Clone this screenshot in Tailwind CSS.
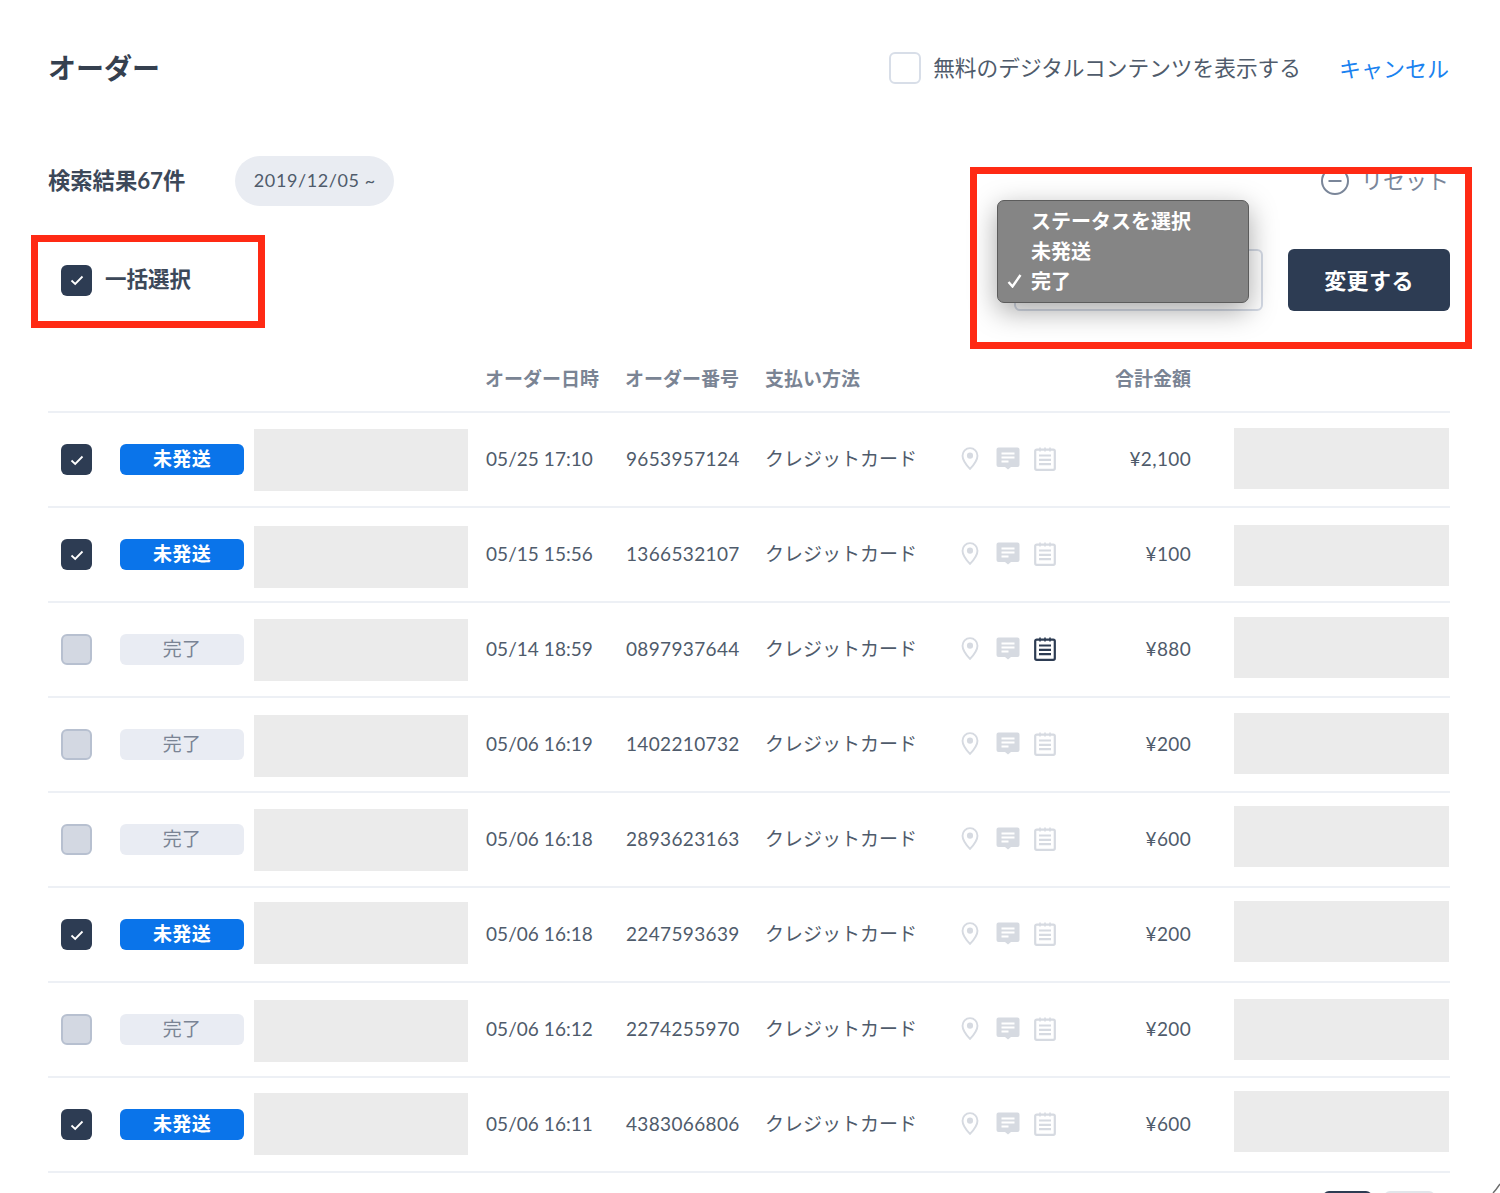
<!DOCTYPE html>
<html lang="ja">
<head>
  <meta charset="UTF-8">
  <meta name="viewport" content="width=device-width, initial-scale=1.0">
  <title>オーダー</title>
  <script src="https://cdn.jsdelivr.net/npm/@tailwindcss/browser@4"></script>
</head>
<body class="bg-white h-[1193px] overflow-hidden relative font-['Lato','Noto_Sans_CJK_JP',sans-serif] text-[#2d3c53]">
  <div class="pl-12 pr-[50px]">
    <!-- header -->
    <div class="flex items-center h-[136px]">
      <h1 class="text-[28px] font-bold text-[#35404f] flex-1">オーダー</h1>
      <span class="w-[32px] h-[32px] rounded-md border-2 border-[#d8dee8] mr-[12px]"></span>
      <span class="text-[21.7px] text-[#4f5b6b]">無料のデジタルコンテンツを表示する</span>
      <a class="text-[22px] text-[#1a82f0] ml-[38px] mr-[1px]">キャンセル</a>
    </div>

    <!-- search summary -->
    <div class="flex items-center h-[50px] mt-[20px]">
      <span class="text-[22.3px] font-bold text-[#3c4859] mr-[50px]">検索結果67件</span>
      <span class="h-[50px] w-[159px] rounded-full bg-[#e9ecf2] text-[18px] tracking-[0.6px] text-[#4f5b6b] flex items-center justify-center pb-[2px]">2019/12/05 ~</span>
    </div>

    <!-- bulk actions -->
    <div class="flex items-center h-[62px] mt-[43px]">
      <span class="ml-[13px] w-[31px] h-[31px] rounded-md bg-[#2d3c53] flex items-center justify-center">
        <svg width="14" height="12" viewBox="0 0 14 12" fill="none" stroke="white" stroke-width="1.8"><path d="M1.5 6.5 5.2 10 12.5 2.5"/></svg>
      </span>
      <span class="text-[21.5px] font-bold text-[#3c4859] ml-[13px] mb-[2px]">一括選択</span>
      <div class="flex-1"></div>
      <div class="w-[249px] h-[62px] rounded-md border-2 border-[#d5dbe6] mr-[25px]"></div>
      <button class="w-[162px] h-[62px] rounded-md bg-[#2d3c53] text-white text-[22px] font-semibold tracking-[0.4px]">変更する</button>
    </div>

    <!-- table head -->
    <div class="flex items-center h-[68px] mt-[34px] pt-[2px] border-b-2 border-[#edf0f5] text-[19px] font-bold text-[#7a8494]">
      <span class="ml-[437px] w-[140px]">オーダー日時</span>
      <span class="w-[140px]">オーダー番号</span>
      <span class="w-[150px]">支払い方法</span>
      <span class="w-[276px] text-right">合計金額</span>
    </div>

    <div id="rows"></div>
  </div>

  <!-- pagination, cut off by the screenshot -->
  <div class="absolute top-[1191px] left-[1323px] w-[49px] h-[10px] rounded-t-md bg-[#2d3c53]"></div>
  <div class="absolute top-[1191px] left-[1384px] w-[51px] h-[10px] rounded-t-md bg-[#e2e5ea]"></div>

  <!-- window corner -->
  <svg class="absolute left-[1490px] top-[1181px]" width="10" height="12" viewBox="0 0 10 12" fill="none" stroke="#6b6b6b" stroke-width="1.4"><path d="M10 3C8 6 6 9 3 12"/></svg>

  <!-- reset, partly under the red frame -->
  <div class="absolute left-[1320px] top-[164px] flex items-center gap-[11px] text-[22px] text-[#7a8699]">
    <svg width="30" height="30" viewBox="0 0 30 30" fill="none" stroke="#7a8699" stroke-width="2"><circle cx="15" cy="15" r="13"/><path d="M8.5 15h13"/></svg>
    <span>リセット</span>
  </div>

  <!-- native select popup -->
  <div class="absolute left-[997px] top-[200px] w-[252px] h-[103px] rounded-[7px] bg-[#858585] border border-[#5c5c5c] shadow-[0_8px_28px_rgba(0,0,0,0.35)] text-white text-[20px] font-semibold pl-[33px] pt-[4.5px] leading-[30px]">
    <div>ステータスを選択</div>
    <div>未発送</div>
    <div class="relative">
      <svg class="absolute left-[-24px] top-[8px]" width="15" height="14" viewBox="0 0 15 14" fill="none" stroke="white" stroke-width="2.4"><path d="M1.5 8 5.5 12.5 13.5 1"/></svg>
      完了
    </div>
  </div>

  <!-- annotation frames -->
  <div class="absolute left-[31px] top-[235px] w-[234px] h-[93px] border-[7px] border-[#ff2a14]"></div>
  <div class="absolute left-[970px] top-[167px] w-[502px] h-[182px] border-[7px] border-[#ff2a14]"></div>

  <script>
    const orders = [
      ["05/25 17:10", "9653957124", "¥2,100", true, 16, 15, false],
      ["05/15 15:56", "1366532107", "¥100", true, 18, 17, false],
      ["05/14 18:59", "0897937644", "¥880", false, 16, 14, true],
      ["05/06 16:19", "1402210732", "¥200", false, 17, 15, false],
      ["05/06 16:18", "2893623163", "¥600", false, 16, 13, false],
      ["05/06 16:18", "2247593639", "¥200", true, 14, 13, false],
      ["05/06 16:12", "2274255970", "¥200", false, 17, 16, false],
      ["05/06 16:11", "4383066806", "¥600", true, 15, 13, false]
    ];

    const checked = `<span class="w-[31px] h-[31px] rounded-md bg-[#2d3c53] flex items-center justify-center"><svg width="14" height="12" viewBox="0 0 14 12" fill="none" stroke="white" stroke-width="1.8"><path d="M1.5 6.5 5.2 10 12.5 2.5"/></svg></span>`;
    const unchecked = `<span class="w-[31px] h-[31px] rounded-md bg-[#d3d8e2] border-2 border-[#b7c0d0]"></span>`;
    const unsent = `<span class="w-[124px] h-[31px] ml-[28px] rounded-md bg-[#0a74ea] text-white text-[19px] font-bold flex items-center justify-center">未発送</span>`;
    const done = `<span class="w-[124px] h-[31px] ml-[28px] rounded-md bg-[#e9ecf3] text-[#7a8494] text-[19px] flex items-center justify-center">完了</span>`;

    const pin = `<svg width="18" height="23" viewBox="0 0 18 24" fill="none"><path d="M9 1.2C4.6 1.2 1.2 4.6 1.2 9c0 4.6 4.6 10.4 7.8 13.8C12.2 19.4 16.8 13.6 16.8 9c0-4.4-3.4-7.8-7.8-7.8z" stroke="#d6dae1" stroke-width="2"/><circle cx="9" cy="9" r="3.2" fill="#d6dae1"/></svg>`;
    const comment = `<svg width="24" height="23" viewBox="0 0 24 23"><path d="M2.5 0.5h19a2 2 0 0 1 2 2v15.5a2 2 0 0 1-2 2h-6.500L12 22.500 9 20H2.500a2 2 0 0 1-2-2V2.500a2 2 0 0 1 2-2z" fill="#d6dae1"/><path d="M5.500 6.500h13M5.500 10.500h13M5.500 14.500h7" stroke="white" stroke-width="2"/></svg>`;
    const note = (c) => `<svg width="22" height="24" viewBox="0 0 22 24" fill="none"><rect x="1.2" y="2.600" width="19.600" height="20.200" rx="1.500" stroke="${c}" stroke-width="2.200"/><path d="M5 8.500h12M5 12.800h12M5 17.200h12" stroke="${c}" stroke-width="2.200"/><path d="M6 .5v4M11 .5v4M16 .5v4" stroke="${c}" stroke-width="1.600"/></svg>`;

    document.getElementById("rows").innerHTML = orders.map(([date, no, total, isUnsent, leftTop, rightTop, hasNote]) => `
      <div class="flex items-center h-[95px] border-b-2 border-[#edf0f5] text-[19px] tracking-[0.35px] text-[#4f5b6b]">
        <div class="ml-[13px] flex items-center">${isUnsent ? checked + unsent : unchecked + done}</div>
        <div class="w-[214px] h-[62px] ml-[10px] bg-[#ebebeb] self-start" style="margin-top:${leftTop}px"></div>
        <span class="ml-[18px] w-[140px] tracking-[0.05px]">${date}</span>
        <span class="w-[139px]">${no}</span>
        <span class="w-[196px] tracking-normal">クレジットカード</span>
        <div class="flex items-center w-[150px] mb-[2px]">
          <span class="w-[18px] flex">${pin}</span>
          <span class="ml-[17px] flex">${comment}</span>
          <span class="ml-[14px] flex">${note(hasNote ? "#2d3c53" : "#d6dae1")}</span>
        </div>
        <span class="w-[80px] text-right">${total}</span>
        <div class="w-[215px] h-[61px] ml-[43px] bg-[#ebebeb] self-start" style="margin-top:${rightTop}px"></div>
      </div>`).join("");
  </script>
</body>
</html>
